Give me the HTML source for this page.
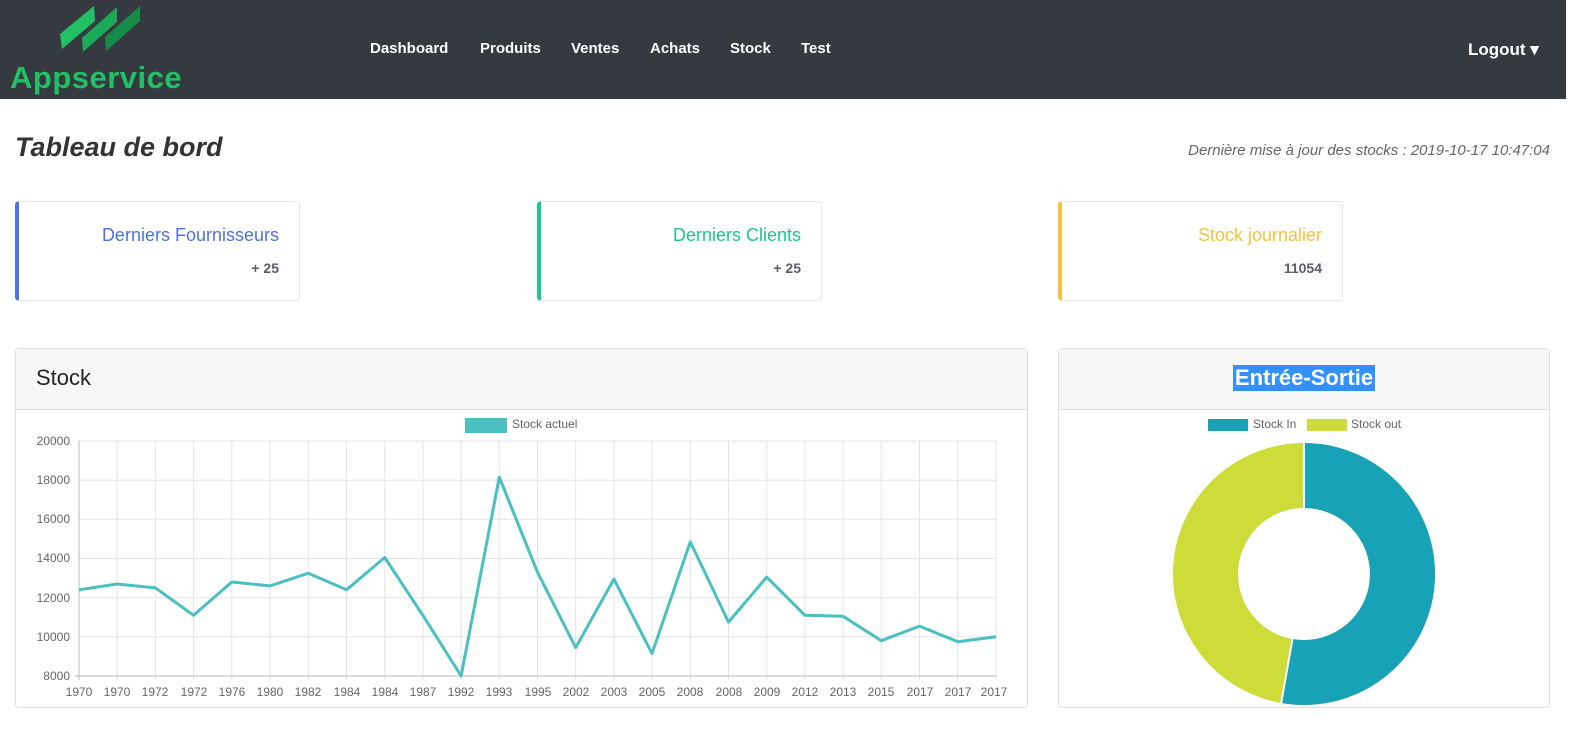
<!DOCTYPE html>
<html><head><meta charset="utf-8"><style>
*{margin:0;padding:0;box-sizing:border-box}
body{width:1586px;height:746px;background:#fff;font-family:"Liberation Sans",sans-serif;position:relative;overflow:hidden;color:#212529}
.nav{position:absolute;left:0;top:0;width:1566px;height:99px;background:#343a40}
.nav a{position:absolute;top:40px;color:#fff;font-weight:bold;font-size:15px}
.logo{position:absolute;left:10px;top:60px;color:#22c065;font-weight:bold;font-size:31px;letter-spacing:0.5px}
.card{position:absolute;top:201px;height:100px;width:285px;border:1px solid #e3e6f0;border-radius:4px;text-align:right;padding-right:20px}
.card .t{font-size:18px;margin-top:23px}
.card .v{font-size:14px;font-weight:bold;color:#5a5c69;margin-top:14px}
.panel{position:absolute;top:348px;height:360px;border:1px solid #ddd;border-radius:4px}
.ph{height:61px;background:#f7f7f7;border-bottom:1px solid #ddd}
</style></head><body>
<div class="nav">
<svg style="position:absolute;left:0;top:0" width="160" height="60"><polygon points="60,34 94,6 95,21 62,49" fill="#22c065"/><polygon points="82,38 117,7 117,22 83,52" fill="#1ea85a"/><polygon points="105,37 140,6 140,21 106,51" fill="#168a47"/></svg>
<div class="logo">Appservice</div>
<a style="left:370px">Dashboard</a><a style="left:480px">Produits</a><a style="left:571px">Ventes</a><a style="left:650px">Achats</a><a style="left:730px">Stock</a><a style="left:801px">Test</a>
<a style="left:1468px;top:40px;font-size:17px">Logout ▾</a>
</div>
<div style="position:absolute;left:15px;top:132px;font-size:27px;font-style:italic;font-weight:bold;color:#333">Tableau de bord</div>
<div style="position:absolute;right:36px;top:142px;font-size:15px;font-style:italic;color:#666">Dernière mise à jour des stocks : 2019-10-17 10:47:04</div>
<div class="card" style="left:15px;border-left:4px solid #4e73df"><div class="t" style="color:#4e73df">Derniers Fournisseurs</div><div class="v">+ 25</div></div>
<div class="card" style="left:537px;border-left:4px solid #1cc88a"><div class="t" style="color:#1cc88a">Derniers Clients</div><div class="v">+ 25</div></div>
<div class="card" style="left:1058px;border-left:4px solid #f6c23e"><div class="t" style="color:#f6c23e">Stock journalier</div><div class="v">11054</div></div>
<div class="panel" style="left:15px;width:1013px"><div class="ph"><div style="padding:16px 20px;font-size:22px">Stock</div></div></div>
<div class="panel" style="left:1058px;width:492px"><div class="ph" style="text-align:center"><span style="display:inline-block;margin-top:16px;background:#3390ff;color:#fff;font-size:22px;font-weight:bold;padding:0 2px">Entrée-Sortie</span></div></div>
<svg style="position:absolute;left:0;top:0" width="1586" height="746" font-family="Liberation Sans,sans-serif" font-size="12" fill="#666">
<rect x="465" y="418" width="42" height="15" fill="#4bc0c0"/><text x="512" y="428">Stock actuel</text>
<g stroke="#e5e5e5"><line x1="79" y1="441" x2="996" y2="441"/><line x1="79" y1="480.2" x2="996" y2="480.2"/><line x1="79" y1="519.3" x2="996" y2="519.3"/><line x1="79" y1="558.5" x2="996" y2="558.5"/><line x1="79" y1="597.7" x2="996" y2="597.7"/><line x1="79" y1="636.8" x2="996" y2="636.8"/>
<path d="M117.2 441V680M155.4 441V680M193.6 441V680M231.8 441V680M270 441V680M308.3 441V680M346.5 441V680M384.7 441V680M422.9 441V680M461.1 441V680M499.3 441V680M537.5 441V680M575.7 441V680M613.9 441V680M652 441V680M690.3 441V680M728.5 441V680M766.7 441V680M804.9 441V680M843.1 441V680M881.3 441V680M919.5 441V680M957.7 441V680M996 441V680"/></g>
<line x1="79" y1="441" x2="79" y2="680" stroke="#bbb"/><line x1="75" y1="676" x2="996" y2="676" stroke="#bbb"/>
<g text-anchor="end"><text x="70" y="445">20000</text><text x="70" y="484">18000</text><text x="70" y="523">16000</text><text x="70" y="562">14000</text><text x="70" y="602">12000</text><text x="70" y="641">10000</text><text x="70" y="680">8000</text></g>
<g text-anchor="middle"><text x="79" y="696">1970</text><text x="117" y="696">1970</text><text x="155" y="696">1972</text><text x="194" y="696">1972</text><text x="232" y="696">1976</text><text x="270" y="696">1980</text><text x="308" y="696">1982</text><text x="347" y="696">1984</text><text x="385" y="696">1984</text><text x="423" y="696">1987</text><text x="461" y="696">1992</text><text x="499" y="696">1993</text><text x="538" y="696">1995</text><text x="576" y="696">2002</text><text x="614" y="696">2003</text><text x="652" y="696">2005</text><text x="690" y="696">2008</text><text x="729" y="696">2008</text><text x="767" y="696">2009</text><text x="805" y="696">2012</text><text x="843" y="696">2013</text><text x="881" y="696">2015</text><text x="920" y="696">2017</text><text x="958" y="696">2017</text><text x="994" y="696">2017</text></g>
<polyline fill="none" stroke="#4bc0c0" stroke-width="3" stroke-linejoin="round" points="79,589.8 117.2,584 155.4,587.9 193.6,615.3 231.8,582 270,585.9 308.3,573.2 346.5,589.8 384.7,557.5 422.9,615.3 461.1,676 499.3,477.2 537.5,572.2 575.7,647.6 613.9,579.1 652,653.5 690.3,541.9 728.5,622.1 766.7,577.1 804.9,615.3 843.1,616.3 881.3,640.7 919.5,626.1 957.7,641.7 996,636.8"/>
<rect x="1208" y="419" width="40" height="12" fill="#17a2b8"/><text x="1253" y="428">Stock In</text>
<rect x="1307" y="419" width="40" height="12" fill="#cddc39"/><text x="1351" y="428">Stock out</text>
<circle cx="1304" cy="574" r="98.5" fill="none" stroke="#cddc39" stroke-width="65"/>
<circle cx="1304" cy="574" r="98.5" fill="none" stroke="#17a2b8" stroke-width="65" stroke-dasharray="326.6 700" transform="rotate(-90 1304 574)"/>
<line x1="1304" y1="443" x2="1304" y2="508" stroke="#fff" stroke-width="2"/><line x1="1281.2" y1="703" x2="1292.5" y2="639" stroke="#fff" stroke-width="2"/>
</svg>
</body></html>
